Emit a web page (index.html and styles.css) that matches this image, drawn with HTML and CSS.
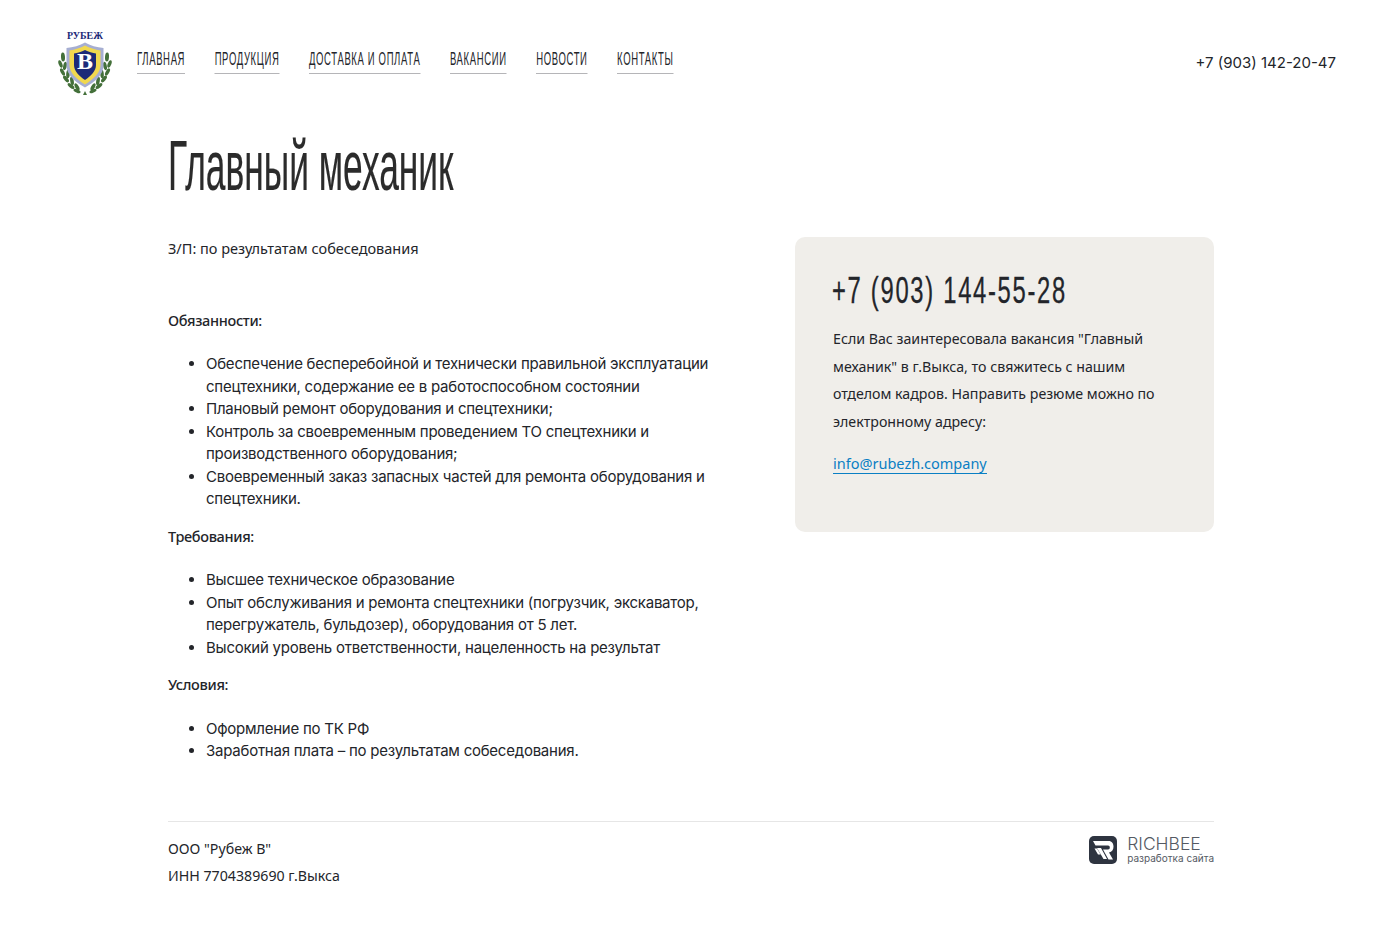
FILE: index.html
```html
<!DOCTYPE html>
<html lang="ru">
<head>
    <meta charset="UTF-8">
    <meta name="viewport" content="width=device-width, initial-scale=1.0">
    <title>Главный механик</title>
    <link rel="stylesheet" href="styles.css">
</head>
<body>
    <header class="header">
        <a class="logo" href="#">
            <svg width="54" height="68" viewBox="0 0 54 68">
                <text x="9" y="9.500" textLength="36" lengthAdjust="spacingAndGlyphs" class="logo-text">РУБЕЖ</text>
                <g id="laurel" fill="#44703a">
                    <ellipse cx="5" cy="28" rx="2" ry="4.500" transform="rotate(-4 5 28)"/>
                    <ellipse cx="2.500" cy="35" rx="1.800" ry="4" transform="rotate(-20 2.500 35)"/>
                    <ellipse cx="7" cy="37" rx="1.800" ry="4.200" transform="rotate(12 7 37)"/>
                    <ellipse cx="4.500" cy="43" rx="1.800" ry="4" transform="rotate(-28 4.500 43)"/>
                    <ellipse cx="10" cy="45" rx="1.800" ry="4.200" transform="rotate(5 10 45)"/>
                    <ellipse cx="8" cy="50" rx="1.800" ry="4" transform="rotate(-40 8 50)"/>
                    <ellipse cx="14" cy="52" rx="1.800" ry="4.200" transform="rotate(-10 14 52)"/>
                    <ellipse cx="13" cy="57" rx="1.800" ry="4" transform="rotate(-52 13 57)"/>
                    <ellipse cx="19" cy="58" rx="1.800" ry="4" transform="rotate(-30 19 58)"/>
                    <ellipse cx="19" cy="62" rx="1.600" ry="3.800" transform="rotate(-65 19 62)"/>
                </g>
                <use href="#laurel" transform="matrix(-1 0 0 1 54 0)"/>
                <path d="M25 66l2-4 2 4z" fill="#44703a"/>
                <path d="M27 13.500c5 3 12 5 18.500 5.500v17c0 10-8.500 17-18.500 22.500C17 53 8.500 46 8.500 36V19c6.500-.5 13.500-2.500 18.500-5.500z" fill="#a6aed2"/>
                <path d="M27 16.500c4.500 2.500 10 4 15.500 5v14.500c0 8-7 14-15.500 19.500-8.500-5.500-15.500-11.500-15.500-19.500V21.500c5.500-1 11-2.500 15.500-5z" fill="#f1d84e"/>
                <path d="M27 21c3.500 2 7.500 3 11 3.500V36c0 6-5 11-11 15-6-4-11-9-11-15V24.500c3.500-.5 7.500-1.500 11-3.500z" fill="#1d2a78"/>
                <text x="27" y="40" text-anchor="middle" class="logo-letter">В</text>
            </svg>
        </a>
        <nav class="menu">
            <a href="#">Главная</a>
            <a href="#">Продукция</a>
            <a href="#">Доставка и оплата</a>
            <a href="#">Вакансии</a>
            <a href="#">Новости</a>
            <a href="#">Контакты</a>
        </nav>
        <a class="header-phone" href="#">+7 (903) 142-20-47</a>
    </header>

    <main class="container">
        <h1 class="title">Главный механик</h1>
        <div class="columns">
            <div class="vacancy">
                <p class="salary">З/П: по результатам собеседования</p>
                <p class="label">Обязанности:</p>
                <ul>
                    <li>Обеспечение бесперебойной и технически правильной эксплуатации спецтехники, содержание ее в работоспособном состоянии</li>
                    <li>Плановый ремонт оборудования и спецтехники;</li>
                    <li>Контроль за своевременным проведением ТО спецтехники и производственного оборудования;</li>
                    <li>Своевременный заказ запасных частей для ремонта оборудования и спецтехники.</li>
                </ul>
                <p class="label">Требования:</p>
                <ul>
                    <li>Высшее техническое образование</li>
                    <li>Опыт обслуживания и ремонта спецтехники (погрузчик, экскаватор, перегружатель, бульдозер), оборудования от 5 лет.</li>
                    <li>Высокий уровень ответственности, нацеленность на результат</li>
                </ul>
                <p class="label">Условия:</p>
                <ul>
                    <li>Оформление по ТК РФ</li>
                    <li>Заработная плата – по результатам собеседования.</li>
                </ul>
            </div>
            <aside class="contact-card">
                <div class="contact-phone">+7 (903) 144-55-28</div>
                <p>Если Вас заинтересовала вакансия "Главный механик" в г.Выкса, то свяжитесь с нашим отделом кадров. Направить резюме можно по электронному адресу:</p>
                <a class="contact-mail" href="#">info@rubezh.company</a>
            </aside>
        </div>
        <footer class="footer">
            <div class="requisites">
                <div>ООО "Рубеж В"</div>
                <div>ИНН 7704389690 г.Выкса</div>
            </div>
            <a class="richbee" href="#">
                <svg width="28" height="28" viewBox="0 0 28 28">
                    <rect width="28" height="28" rx="5" fill="#2e3440"/>
                    <path d="M4 5h15.500c3.500 0 5 2.500 5 5.500s-1.500 5.500-4.500 6l4 7h-4.500l-5.500-10h5c1.300 0 1.800-.8 1.800-2s-.5-2-1.800-2H6.500z" fill="#fff"/>
                    <path d="M8 12h4l6 11h-3.500zM5.500 12.500H8l3.500 6H9z" fill="#fff"/>
                </svg>
                <span class="richbee-text">
                    <span class="richbee-name">RICHBEE</span>
                    <span class="richbee-sub">разработка сайта</span>
                </span>
            </a>
        </footer>
    </main>
</body>
</html>
```

FILE: styles.css
```css
* {
  box-sizing: border-box;
}
body {
  margin: 0;
  background: #fff;
  color: #23252a;
  font-family: "Inter", sans-serif;
  font-size: 15px;
}
a {
  color: inherit;
  text-decoration: none;
}
.header {
  display: flex;
  align-items: center;
  padding: 29px 64px 0 58px;
  height: 96px;
}
.logo {
  display: flex;
  margin-right: 25px;
}
.logo-text {
  font-family: "Liberation Serif", serif;
  font-weight: bold;
  font-size: 11px;
  fill: #1d2a78;
}
.logo-letter {
  font-family: "Liberation Serif", serif;
  font-weight: bold;
  font-size: 24px;
  fill: #fff;
}
/* no condensed face installed, so the menu is squeezed as a whole */
.menu {
  display: flex;
  flex: none;
  width: 800px;
  gap: 59px;
  margin-top: -5px;
  transform: scaleX(.5);
  transform-origin: left;
}
.menu a {
  font-family: "Liberation Sans", sans-serif;
  font-size: 19px;
  line-height: 24px;
  letter-spacing: 1.3px;
  text-transform: uppercase;
  white-space: nowrap;
  border-bottom: 1px solid #b5b5b8;
  padding-bottom: 2px;
}
.header-phone {
  margin-left: auto;
  font-size: 15px;
  white-space: nowrap;
}
.container {
  width: 1046px;
  margin-left: 168px;
}
.title {
  margin: 32px 0 0;
  font-family: "Liberation Sans", sans-serif;
  font-weight: normal;
  font-size: 70px;
  line-height: 76px;
  white-space: nowrap;
  transform: scaleX(.505);
  transform-origin: left;
  color: #2b2b2b;
  -webkit-text-stroke: .2px;
}
.columns {
  display: flex;
  justify-content: space-between;
  margin-top: 33px;
}
.vacancy {
  width: 552px;
  line-height: 22.5px;
  letter-spacing: -.24px;
}
.vacancy p {
  margin: 0;
  font-family: "Noto Sans", sans-serif;
  font-size: 14.5px;
  letter-spacing: 0;
}
.vacancy .salary {
  margin-bottom: 49px;
}
.vacancy .label {
  font-weight: 500;
  letter-spacing: -.33px;
}
.vacancy ul {
  margin: 22px 0 14px;
  padding-left: 38px;
}
.contact-card {
  width: 419px;
  height: 295px;
  padding: 32px 38px;
  border-radius: 10px;
  background: #f0eeea;
  font-family: "Noto Sans", sans-serif;
  font-size: 14.2px;
}
.contact-phone {
  margin-left: -1px;
  font-family: "Liberation Sans", sans-serif;
  font-size: 36px;
  line-height: 44px;
  letter-spacing: 2.6px;
  white-space: nowrap;
  transform: scaleX(.66);
  transform-origin: left;
  -webkit-text-stroke: .3px;
}
.contact-card p {
  margin: 12px 0 18px;
  line-height: 27.500px;
}
.contact-mail {
  color: #0a7fc4;
  border-bottom: 1px solid #0a7fc4;
  font-size: 14.500px;
}
.footer {
  display: flex;
  justify-content: space-between;
  margin-top: 44px;
  padding-top: 13px;
  border-top: 1px solid #e6e6e6;
}
.requisites {
  font-family: "Noto Sans", sans-serif;
  font-size: 14.2px;
  line-height: 27px;
}
.richbee {
  display: flex;
  align-items: center;
  gap: 10px;
  height: 30px;
}
.richbee-text {
  display: flex;
  flex-direction: column;
  color: #555a63;
}
.richbee-name {
  font-size: 17.5px;
  font-weight: 300;
  line-height: 18px;
}
.richbee-sub {
  font-size: 10px;
  line-height: 11px;
}
```
